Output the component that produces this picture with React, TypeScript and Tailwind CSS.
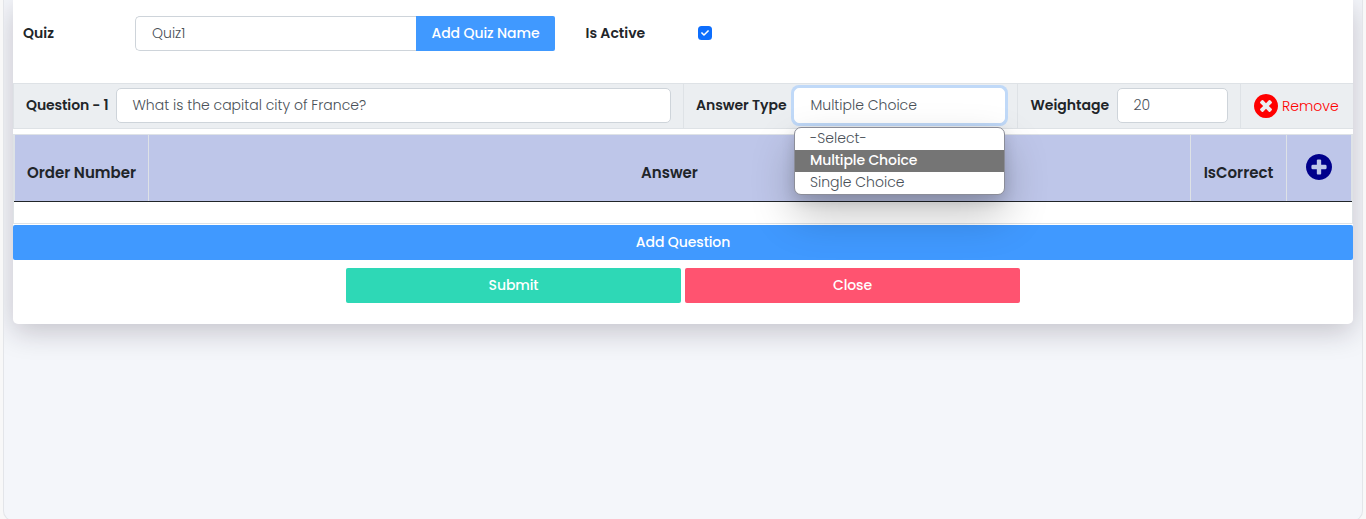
import { FaCheck } from "react-icons/fa";

const label = "whitespace-nowrap leading-[35px] font-semibold text-[#212529]";
const field = "flex h-[35px] items-center rounded-[5px] border border-[#ced4da] bg-white px-4 font-light text-[#495057]";

const disc = "M1536 896q0 209-103 385.5t-279.5 279.5-385.5 103-385.5-103-279.5-279.5-103-385.5 103-385.5 279.5-279.5 385.5-103 385.5 103 279.5 279.5 103 385.5z";
const cross = "M1149 1122q0-26-19-45l-181-181 181-181q19-19 19-45 0-27-19-46l-90-90q-19-19-46-19-26 0-45 19l-181 181-181-181q-19-19-45-19-27 0-46 19l-90 90q-19 19-19 46 0 26 19 45l181 181-181 181q-19 19-19 45 0 27 19 46l90 90q19 19 46 19 26 0 45-19l181-181 181 181q19 19 45 19 27 0 46-19l90-90q19-19 19-46z";
const plus = "M1216 960v-128q0-26-19-45t-45-19h-256v-256q0-26-19-45t-45-19h-128q-26 0-45 19t-19 45v256h-256q-26 0-45 19t-19 45v128q0 26 19 45t45 19h256v256q0 26 19 45t45 19h128q26 0 45-19t19-45v-256h256q26 0 45-19t19-45z";

function CircleIcon({ mark, className }: { mark: string; className: string }) {
  return (
    <svg viewBox="0 128 1536 1536" fill="currentColor" fillRule="evenodd" className={className}>
      <path d={`${disc} ${mark}`} />
    </svg>
  );
}

function QuizRow() {
  return (
    <div className="flex h-[83px] items-start pt-4">
      <div className={`${label} w-[122px] pl-[10px]`}>Quiz</div>
      <div className="flex w-[420px]">
        <div className={`${field} w-[281px] rounded-r-none border-r-0`}>Quiz1</div>
        <button className="h-[35px] w-[139px] rounded-r-[2px] bg-[#4099ff] font-medium tracking-[-0.1px] text-white">Add Quiz Name</button>
      </div>
      <div className={`${label} w-[143px] pl-[30.5px]`}>Is Active</div>
      <div className="mt-[10px] flex size-[14px] items-center justify-center rounded-[3.5px] bg-[#0d6efd]">
        <FaCheck className="size-[8px] text-white" />
      </div>
    </div>
  );
}

function QuestionRow() {
  return (
    <div className="flex h-[46px] border-y border-l border-[#dee2e6] bg-[#ebeef1]">
      <div className="flex w-[670px] items-start border-r border-[#dee2e6] pt-1 pl-3">
        <span className={`${label} w-[90px] tracking-[-0.12px]`}>Question - 1</span>
        <div className={`${field} w-[555px] pl-[15.5px]`}>What is the capital city of France?</div>
      </div>
      <div className="flex w-[334px] items-start border-r border-[#dee2e6] pt-1 pl-3">
        <span className={`${label} w-[98px] tracking-[-0.05px]`}>Answer Type</span>
        <div className="relative">
          <div className={`${field} w-[211px] border-white pl-[15.5px] ring-[3px] ring-[#c0d9f8]`}>Multiple Choice</div>
          <div className="absolute top-[39px] left-0 z-10 w-[211px] overflow-hidden rounded-[7px] border border-[#8b8d98] bg-white font-light text-[#495057] shadow-[0_20px_44px_rgba(0,0,0,0.23),0_5px_14px_rgba(0,0,0,0.14)]">
            <div className="h-[22px] pl-[15px] leading-[21px]">-Select-</div>
            <div className="h-[22px] bg-[#757575] pl-[15px] leading-[21px] font-medium tracking-[-0.12px] text-white">Multiple Choice</div>
            <div className="h-[22px] pl-[15px] leading-[21px]">Single Choice</div>
          </div>
        </div>
      </div>
      <div className="flex w-[223px] items-start border-r border-[#dee2e6] pt-1 pl-3">
        <span className={`${label} w-[87px] pl-[0.5px]`}>Weightage</span>
        <div className={`${field} w-[111px] pl-[15.5px]`}>20</div>
      </div>
      <div className="flex items-center pl-[13px] font-light text-[#ff0000]">
        <CircleIcon mark={cross} className="mr-[4px] size-[24px]" />
        <span>Remove</span>
      </div>
    </div>
  );
}

function AnswerTable() {
  const heading = "border-r border-[#dee2e6] pt-[25px] text-center text-[15px] leading-[26px] font-semibold text-[#212529]";
  return (
    <div className="mt-[5px] h-[90px] border border-[#dee2e6] bg-white">
      <div className="border-b border-[#212529]">
        <div className="flex h-[66px] border-x border-[#dee2e6] bg-[#bec6e9]">
          <div className={`${heading} w-[134px]`}>Order Number</div>
          <div className={`${heading} w-[1042px]`}>Answer</div>
          <div className={`${heading} w-[96px]`}>IsCorrect</div>
          <div className="flex flex-1 justify-center pt-[19px] text-[#00008b]">
            <CircleIcon mark={plus} className="size-[26px]" />
          </div>
        </div>
      </div>
    </div>
  );
}

export default function App() {
  return (
    <div className="h-[519px] overflow-hidden bg-[#f8f8f8] px-[3px] text-[14px] font-['Poppins','Inter',sans-serif]">
      <main className="h-[521px] overflow-hidden rounded-b-[10px] border-x border-b border-[#e3e5e9] bg-[#f4f6fa] px-[9px]">
        <section className="h-[324px] rounded-b-[5px] bg-white shadow-[0_8px_28px_rgba(30,20,40,0.22)]">
          <QuizRow />
          <QuestionRow />
          <AnswerTable />
          <button className="mt-px block h-[35px] w-full rounded-[2px] bg-[#4099ff] font-medium tracking-[-0.1px] text-white">Add Question</button>
          <div className="mt-2 flex justify-center gap-1 font-medium tracking-[-0.1px] text-white">
            <button className="h-[35px] w-[335px] rounded-[2px] bg-[#2ed8b6]">Submit</button>
            <button className="h-[35px] w-[335px] rounded-[2px] bg-[#ff5370]">Close</button>
          </div>
        </section>
      </main>
    </div>
  );
}
